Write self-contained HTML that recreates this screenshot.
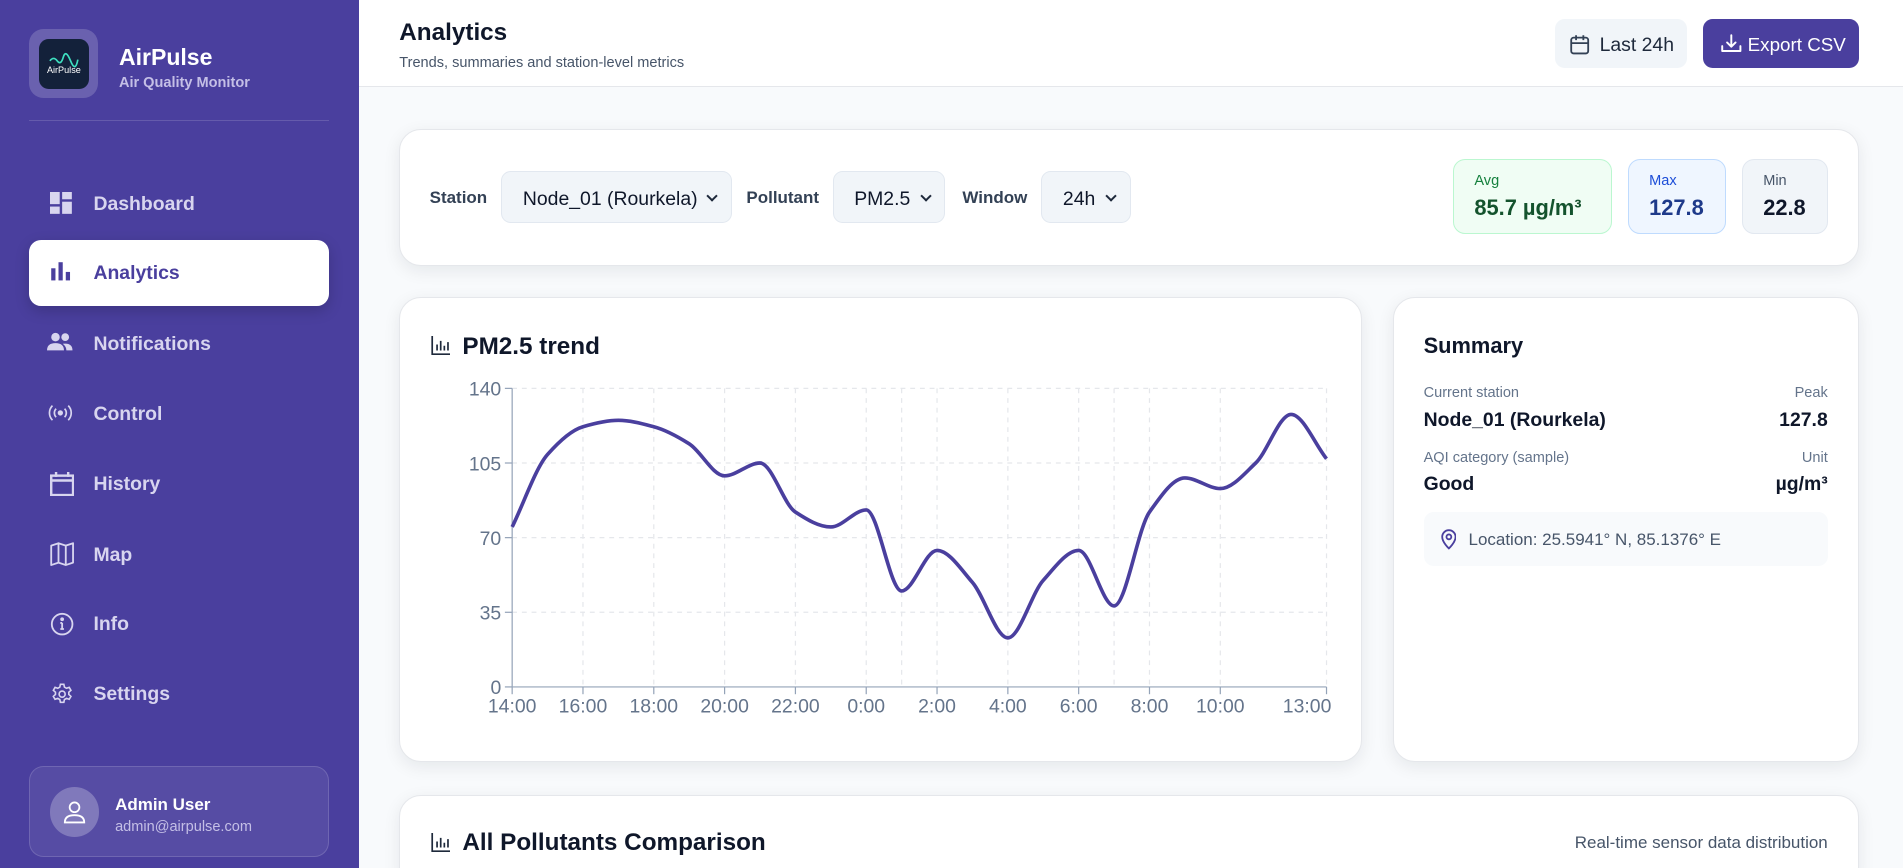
<!DOCTYPE html>
<html><head><meta charset="utf-8">
<style>
*{box-sizing:border-box;margin:0;padding:0}
html,body{width:1903px;height:868px;overflow:hidden}
body{font-family:"Liberation Sans",sans-serif;background:#f8fafc}
#root{width:1568px;height:715px;zoom:1.21365;position:relative;overflow:hidden;background:#f8fafc}
.abs{position:absolute}
.side{left:0;top:0;width:296px;height:715px;background:#4a3f9e}
.logo{left:24px;top:24px;width:57px;height:57px;border-radius:12px;background:rgba(255,255,255,.18)}
.logoin{left:8px;top:8px;width:41px;height:41px;border-radius:8px;background:#13213a;color:#fff;font-size:8px;text-align:center}
.nav{left:24px;width:247px;height:54px;border-radius:10px;color:#d8d5ef;font-size:16px;font-weight:bold}
.nav svg{position:absolute;left:17px;top:17px}
.nav span{position:absolute;left:53px;top:18px}
.nav.act{background:#fff;color:#4a3f9e;box-shadow:0 4px 12px rgba(0,0,0,.18)}
.card{background:#fff;border:1px solid #e5e7eb;border-radius:18px;box-shadow:0 4px 14px rgba(15,23,42,.08)}
.sel{background:#f1f5f9;border:1px solid #e2e8f0;border-radius:8px;height:43px;top:141px;font-size:16px;color:#0f172a;padding:13px 0 0 17px}
.sel:after{content:"";position:absolute;right:12px;top:16px;width:5px;height:5px;border-right:2px solid #1e293b;border-bottom:2px solid #1e293b;transform:rotate(45deg)}
.lbl{top:155px;font-size:14px;font-weight:bold;color:#334155}
.stat{top:131px;height:62px;border-radius:10px;border:1px solid}
.stat .l{position:absolute;left:17px;top:11px;font-size:12px}
.stat .v{position:absolute;left:17px;top:29px;font-size:18px;font-weight:bold}
.sm{font-size:12px;color:#64748b}
.sv{font-size:16px;font-weight:bold;color:#0f172a}
</style></head><body><div id="root">
<div class="abs side">
 <div class="abs logo"><div class="abs logoin">
  <svg width="41" height="41" viewBox="0 0 41 41"><path d="M9 18 q3-4 6 0 t5 -3 t6 3 t6 -1" stroke="#3ee0c0" stroke-width="1.4" fill="none"/><text x="20.5" y="28" font-size="7.5" fill="#fff" text-anchor="middle" font-family="Liberation Sans">AirPulse</text></svg>
 </div></div>
 <div class="abs" style="left:98px;top:36px;color:#fff;font-size:19px;font-weight:bold">AirPulse</div>
 <div class="abs" style="left:98px;top:62px;color:#c4bfe6;font-size:12px;font-weight:bold">Air Quality Monitor</div>
 <div class="abs" style="left:24px;top:99px;width:247px;height:1px;background:rgba(255,255,255,.15)"></div>

 <div class="abs nav" style="top:141px"><svg width="18" height="18" viewBox="0 0 18 18" fill="#d8d5ef"><rect x="0" y="0" width="8" height="10"/><rect x="10" y="0" width="8" height="6"/><rect x="10" y="8" width="8" height="10"/><rect x="0" y="12" width="8" height="6"/></svg><span>Dashboard</span></div>
 <div class="abs nav act" style="top:198px"><svg width="18" height="18" viewBox="0 0 18 18" fill="#4a3f9e"><rect x="1" y="6" width="3.5" height="10"/><rect x="7" y="1" width="3.5" height="15"/><rect x="13" y="9" width="3.5" height="7"/></svg><span>Analytics</span></div>
 <div class="abs nav" style="top:256px"><svg width="22" height="18" viewBox="0 0 22 18" fill="#d8d5ef" style="left:15px"><circle cx="7" cy="5" r="3.5"/><circle cx="15" cy="5" r="3.2"/><path d="M0 16 q0-6 7-6 q7 0 7 6z"/><path d="M13 10.5 q8-1 8 5.5h-5 q0-3-3-5.5z"/></svg><span>Notifications</span></div>
 <div class="abs nav" style="top:314px"><svg width="22" height="18" viewBox="0 0 22 18" fill="none" stroke="#d8d5ef" stroke-width="1.4" style="left:15px"><circle cx="11" cy="9" r="1.5" fill="#d8d5ef"/><path d="M7.5 5.5a5 5 0 0 0 0 7M14.5 5.5a5 5 0 0 1 0 7M4.5 3a8.5 8.5 0 0 0 0 12M17.5 3a8.5 8.5 0 0 1 0 12"/></svg><span>Control</span></div>
 <div class="abs nav" style="top:372px"><svg width="20" height="20" viewBox="0 0 20 20" fill="none" stroke="#d8d5ef" stroke-width="2"><rect x="1" y="3" width="18" height="16"/><path d="M1 7h18M5 0v4M15 0v4"/></svg><span>History</span></div>
 <div class="abs nav" style="top:430px"><svg width="20" height="20" viewBox="0 0 20 20" fill="none" stroke="#d8d5ef" stroke-width="1.5" stroke-linejoin="round"><path d="M1 3l6-2 6 2 6-2v16l-6 2-6-2-6 2z M7 1v16 M13 3v16"/></svg><span>Map</span></div>
 <div class="abs nav" style="top:487px"><svg width="20" height="20" viewBox="0 0 20 20" fill="none" stroke="#d8d5ef" stroke-width="1.5"><circle cx="10" cy="10" r="8.5"/><path d="M10 9v5M8.5 14h3M8.5 9h1.5"/><circle cx="10" cy="6" r=".8" fill="#d8d5ef"/></svg><span>Info</span></div>
 <div class="abs nav" style="top:545px"><svg width="20" height="20" viewBox="0 0 24 24" fill="none" stroke="#d8d5ef" stroke-width="1.6"><path d="M10.3 2.3h3.4l.6 2.8 2 1.1 2.7-.9 1.7 2.9-2.1 1.9v2.2l2.1 1.9-1.7 2.9-2.7-.9-2 1.1-.6 2.8h-3.4l-.6-2.8-2-1.1-2.7.9-1.7-2.9 2.1-1.9v-2.2L3.3 8.2 5 5.3l2.7.9 2-1.1z"/><circle cx="12" cy="12" r="3"/></svg><span>Settings</span></div>

 <div class="abs" style="left:24px;top:631px;width:247px;height:75px;border-radius:12px;background:rgba(255,255,255,.07);border:1px solid rgba(255,255,255,.15)">
  <div class="abs" style="left:16px;top:17px;width:41px;height:41px;border-radius:50%;background:rgba(255,255,255,.25)">
   <svg class="abs" style="left:11px;top:10px" width="19" height="20" viewBox="0 0 19 20" fill="none" stroke="#fff" stroke-width="1.5"><circle cx="9.5" cy="6" r="4"/><path d="M1.5 18.5q0-6 8-6t8 6z"/></svg></div>
  <div class="abs" style="left:70px;top:23px;color:#fff;font-size:14px;font-weight:bold">Admin User</div>
  <div class="abs" style="left:70px;top:43px;color:#c4bfe6;font-size:12px">admin@airpulse.com</div>
 </div>
</div>

<div class="abs" style="left:296px;top:0;width:1272px;height:72px;background:#fff;border-bottom:1px solid #e5e7eb"></div>
<div class="abs" style="left:329px;top:16px;font-size:20px;font-weight:bold;color:#0f172a">Analytics</div>
<div class="abs" style="left:329px;top:45px;font-size:12px;color:#475569">Trends, summaries and station-level metrics</div>
<div class="abs" style="left:1281px;top:16px;width:109px;height:40px;border-radius:8px;background:#f1f5f9">
 <svg class="abs" style="left:13px;top:12px" width="16" height="17" viewBox="0 0 16 17" fill="none" stroke="#334155" stroke-width="1.5"><rect x="1" y="3" width="14" height="13" rx="2"/><path d="M1 7.5h14M5 1v4M11 1v4"/></svg>
 <div class="abs" style="left:37px;top:12px;font-size:16px;color:#1e293b">Last 24h</div></div>
<div class="abs" style="left:1403px;top:16px;width:129px;height:40px;border-radius:8px;background:#4a3f9e">
 <svg class="abs" style="left:15px;top:12px" width="17" height="16" viewBox="0 0 17 16" fill="none" stroke="#fff" stroke-width="1.6" stroke-linecap="round" stroke-linejoin="round"><path d="M8.5 1v9M5 7l3.5 3.5L12 7M1 10v4h15v-4"/></svg>
 <div class="abs" style="left:37px;top:12px;font-size:15.5px;color:#fff">Export CSV</div></div>

<div class="abs card" style="left:329px;top:106px;width:1203px;height:113px"></div>
<div class="abs lbl" style="left:354px">Station</div>
<div class="abs sel" style="left:413px;width:190px">Node_01 (Rourkela)</div>
<div class="abs lbl" style="left:615px">Pollutant</div>
<div class="abs sel" style="left:686px;width:93px">PM2.5</div>
<div class="abs lbl" style="left:793px">Window</div>
<div class="abs sel" style="left:858px;width:74px">24h</div>
<div class="abs stat" style="left:1197px;width:131px;background:#f0fdf4;border-color:#bbf7d0"><div class="l" style="color:#15803d">Avg</div><div class="v" style="color:#14532d">85.7 µg/m³</div></div>
<div class="abs stat" style="left:1341px;width:81px;background:#eff6ff;border-color:#bfdbfe"><div class="l" style="color:#1d4ed8">Max</div><div class="v" style="color:#1e3a8a">127.8</div></div>
<div class="abs stat" style="left:1435px;width:71px;background:#f1f5f9;border-color:#e2e8f0"><div class="l" style="color:#475569">Min</div><div class="v" style="color:#0f172a">22.8</div></div>

<div class="abs card" style="left:329px;top:245px;width:793px;height:383px"></div>
<svg class="abs" style="left:355px;top:277px" width="16" height="16" viewBox="0 0 16 16" fill="none" stroke="#1e293b" stroke-width="1.4"><path d="M1 0v15h15M5 12V7M8 12V4M11 12V8M14 12V5"/></svg>
<div class="abs" style="left:381px;top:274px;font-size:20px;font-weight:bold;color:#0f172a">PM2.5 trend</div>
<svg class="abs" style="left:0;top:0" width="1568" height="715" id="ch" font-family="Liberation Sans" font-size="16" fill="#64748b"></svg>

<div class="abs card" style="left:1148px;top:245px;width:384px;height:383px"></div>
<div class="abs" style="left:1173px;top:274px;font-size:18px;font-weight:bold;color:#0f172a">Summary</div>
<div class="abs sm" style="left:1173px;top:317px">Current station</div>
<div class="abs sm" style="left:1173px;top:317px;width:333px;text-align:right">Peak</div>
<div class="abs sv" style="left:1173px;top:337px">Node_01 (Rourkela)</div>
<div class="abs sv" style="left:1173px;top:337px;width:333px;text-align:right">127.8</div>
<div class="abs sm" style="left:1173px;top:371px">AQI category (sample)</div>
<div class="abs sm" style="left:1173px;top:371px;width:333px;text-align:right">Unit</div>
<div class="abs sv" style="left:1173px;top:390px">Good</div>
<div class="abs sv" style="left:1173px;top:390px;width:333px;text-align:right">µg/m³</div>
<div class="abs" style="left:1173px;top:422px;width:333px;height:44px;border-radius:8px;background:#f8fafc">
 <svg class="abs" style="left:14px;top:14px" width="13" height="17" viewBox="0 0 13 17" fill="none" stroke="#4a3f9e" stroke-width="1.5"><path d="M6.5 16s5.5-5 5.5-9.5a5.5 5.5 0 0 0-11 0C1 11 6.5 16 6.5 16z"/><circle cx="6.5" cy="6.5" r="2"/></svg>
 <div class="abs" style="left:37px;top:15px;font-size:14px;color:#475569">Location: 25.5941° N, 85.1376° E</div></div>

<div class="abs card" style="left:329px;top:655px;width:1203px;height:80px"></div>
<svg class="abs" style="left:355px;top:686px" width="16" height="16" viewBox="0 0 16 16" fill="none" stroke="#1e293b" stroke-width="1.4"><path d="M1 0v15h15M5 12V7M8 12V4M11 12V8M14 12V5"/></svg>
<div class="abs" style="left:381px;top:683px;font-size:20px;font-weight:bold;color:#0f172a">All Pollutants Comparison</div>
<div class="abs" style="left:1173px;top:686px;width:333px;text-align:right;font-size:14px;color:#475569">Real-time sensor data distribution</div>
</div>
<script>
(function(){
var s=document.getElementById('ch'),h='';
var x0=422,x1=1093,y0=566,k=246/140;
function Y(v){return y0-v*k}
[0,35,70,105,140].forEach(function(v){var y=Y(v);
 if(v>0)h+='<line x1="'+x0+'" x2="'+x1+'" y1="'+y+'" y2="'+y+'" stroke="#e5e7eb" stroke-dasharray="4 4"/>';
 h+='<line x1="'+(x0-6)+'" x2="'+x0+'" y1="'+y+'" y2="'+y+'" stroke="#94a3b8"/>';
 h+='<text x="'+(x0-9)+'" y="'+(y+6)+'" text-anchor="end">'+v+'</text>';});
var st=(x1-x0)/23;
var labs=[[0,'14:00'],[2,'16:00'],[4,'18:00'],[6,'20:00'],[8,'22:00'],[10,'0:00'],[12,'2:00'],[14,'4:00'],[16,'6:00'],[18,'8:00'],[20,'10:00'],[23,'13:00']];
[0,2,4,6,8,10,11,12,14,16,17,18,20,23].forEach(function(i){var x=x0+i*st;if(i>0)h+='<line x1="'+x+'" x2="'+x+'" y1="320" y2="'+y0+'" stroke="#e5e7eb" stroke-dasharray="4 4"/>';});
labs.forEach(function(l){var x=x0+l[0]*st;h+='<line x1="'+x+'" x2="'+x+'" y1="'+y0+'" y2="'+(y0+6)+'" stroke="#94a3b8"/>';
 var tx=l[0]==23?1077:x;h+='<text x="'+tx+'" y="'+(y0+21)+'" text-anchor="middle">'+l[1]+'</text>';});
h+='<line x1="'+x0+'" x2="'+x0+'" y1="320" y2="'+y0+'" stroke="#94a3b8"/><line x1="'+x0+'" x2="'+x1+'" y1="'+y0+'" y2="'+y0+'" stroke="#94a3b8"/>';
var d=[75,109,122,125,122,114,99,105,82,75,83,45,64,49,23,50,64,38,82,98,93,105,127.8,107];
var P=d.map(function(v,i){return [x0+i*st,Y(v)]});
var n=P.length,m=[],dl=[];
for(var i=0;i<n-1;i++)dl.push((P[i+1][1]-P[i][1])/st);
for(i=0;i<n;i++){if(i==0)m.push(dl[0]);else if(i==n-1)m.push(dl[n-2]);else{var a=dl[i-1],b=dl[i];m.push(a*b<=0?0:2/(1/a+1/b));}}
var p='M'+P[0][0]+' '+P[0][1];
for(i=0;i<n-1;i++){var t=st/3;p+=' C'+(P[i][0]+t)+' '+(P[i][1]+m[i]*t)+' '+(P[i+1][0]-t)+' '+(P[i+1][1]-m[i+1]*t)+' '+P[i+1][0]+' '+P[i+1][1];}
h+='<path d="'+p+'" fill="none" stroke="#4a3f9e" stroke-width="3"/>';
s.innerHTML=h;})();
</script>
</body></html>
